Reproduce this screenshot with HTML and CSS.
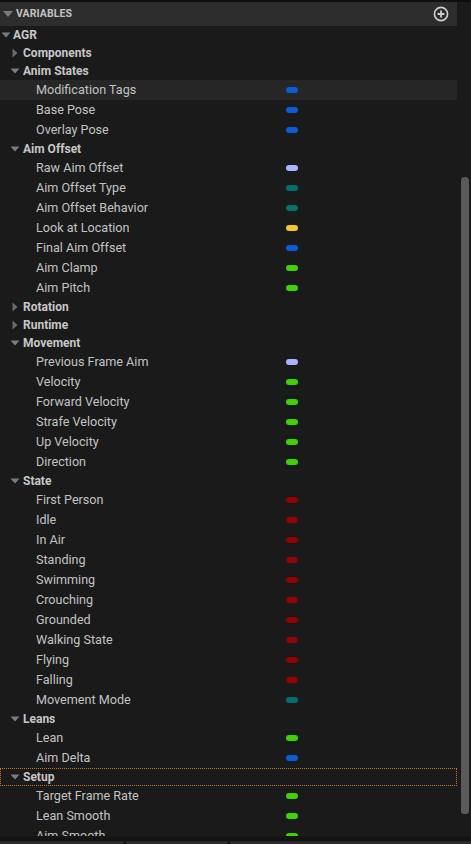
FILE: index.html
```html
<!DOCTYPE html>
<html>
<head>
<meta charset="utf-8">
<link rel="stylesheet" href="styles.css">
</head>
<body>
<div class="app">
  <div class="topstrip"></div>
  <div class="panel">
    <div class="list">
      <div class="header">
        <svg class="tri-down hdr-tri" width="10" height="6" viewBox="0 0 10 6"><polygon points="0,0 10,0 5,6"/></svg>
        <span class="header-title">VARIABLES</span>
        <svg class="add" width="16" height="16" viewBox="0 0 16 16"><circle cx="8" cy="8" r="6.6" fill="none" stroke="#cfcfcf" stroke-width="1.6"/><path d="M8 4.6V11.4M4.6 8H11.4" stroke="#cfcfcf" stroke-width="1.8"/></svg>
      </div>

      <div class="cat root"><svg class="tri-down" width="10" height="6" viewBox="0 0 10 6"><polygon points="0.5,0.5 9.5,0.5 5,5.5"/></svg><span>AGR</span></div>

      <div class="cat"><svg class="tri-right" width="10" height="10" viewBox="0 0 10 10"><polygon points="2.5,0.5 7.5,5 2.5,9.5"/></svg><span>Components</span></div>

      <div class="cat"><svg class="tri-down" width="10" height="6" viewBox="0 0 10 6"><polygon points="0.5,0.5 9.5,0.5 5,5.5"/></svg><span>Anim States</span></div>
      <div class="var selected"><span class="name">Modification Tags</span><span class="pin blue"></span></div>
      <div class="var"><span class="name">Base Pose</span><span class="pin blue"></span></div>
      <div class="var"><span class="name">Overlay Pose</span><span class="pin blue"></span></div>

      <div class="cat"><svg class="tri-down" width="10" height="6" viewBox="0 0 10 6"><polygon points="0.5,0.5 9.5,0.5 5,5.5"/></svg><span>Aim Offset</span></div>
      <div class="var"><span class="name">Raw Aim Offset</span><span class="pin lav"></span></div>
      <div class="var"><span class="name">Aim Offset Type</span><span class="pin teal"></span></div>
      <div class="var"><span class="name">Aim Offset Behavior</span><span class="pin teal"></span></div>
      <div class="var"><span class="name">Look at Location</span><span class="pin gold"></span></div>
      <div class="var"><span class="name">Final Aim Offset</span><span class="pin blue"></span></div>
      <div class="var"><span class="name">Aim Clamp</span><span class="pin green"></span></div>
      <div class="var"><span class="name">Aim Pitch</span><span class="pin green"></span></div>

      <div class="cat"><svg class="tri-right" width="10" height="10" viewBox="0 0 10 10"><polygon points="2.5,0.5 7.5,5 2.5,9.5"/></svg><span>Rotation</span></div>
      <div class="cat"><svg class="tri-right" width="10" height="10" viewBox="0 0 10 10"><polygon points="2.5,0.5 7.5,5 2.5,9.5"/></svg><span>Runtime</span></div>

      <div class="cat"><svg class="tri-down" width="10" height="6" viewBox="0 0 10 6"><polygon points="0.5,0.5 9.5,0.5 5,5.5"/></svg><span>Movement</span></div>
      <div class="var"><span class="name">Previous Frame Aim</span><span class="pin lav"></span></div>
      <div class="var"><span class="name">Velocity</span><span class="pin green"></span></div>
      <div class="var"><span class="name">Forward Velocity</span><span class="pin green"></span></div>
      <div class="var"><span class="name">Strafe Velocity</span><span class="pin green"></span></div>
      <div class="var"><span class="name">Up Velocity</span><span class="pin green"></span></div>
      <div class="var"><span class="name">Direction</span><span class="pin green"></span></div>

      <div class="cat"><svg class="tri-down" width="10" height="6" viewBox="0 0 10 6"><polygon points="0.5,0.5 9.5,0.5 5,5.5"/></svg><span>State</span></div>
      <div class="var"><span class="name">First Person</span><span class="pin red"></span></div>
      <div class="var"><span class="name">Idle</span><span class="pin red"></span></div>
      <div class="var"><span class="name">In Air</span><span class="pin red"></span></div>
      <div class="var"><span class="name">Standing</span><span class="pin red"></span></div>
      <div class="var"><span class="name">Swimming</span><span class="pin red"></span></div>
      <div class="var"><span class="name">Crouching</span><span class="pin red"></span></div>
      <div class="var"><span class="name">Grounded</span><span class="pin red"></span></div>
      <div class="var"><span class="name">Walking State</span><span class="pin red"></span></div>
      <div class="var"><span class="name">Flying</span><span class="pin red"></span></div>
      <div class="var"><span class="name">Falling</span><span class="pin red"></span></div>
      <div class="var"><span class="name">Movement Mode</span><span class="pin teal"></span></div>

      <div class="cat"><svg class="tri-down" width="10" height="6" viewBox="0 0 10 6"><polygon points="0.5,0.5 9.5,0.5 5,5.5"/></svg><span>Leans</span></div>
      <div class="var"><span class="name">Lean</span><span class="pin green"></span></div>
      <div class="var"><span class="name">Aim Delta</span><span class="pin blue"></span></div>

      <div class="cat focused"><svg class="tri-down" width="10" height="6" viewBox="0 0 10 6"><polygon points="0.5,0.5 9.5,0.5 5,5.5"/></svg><span>Setup</span></div>
      <div class="var"><span class="name">Target Frame Rate</span><span class="pin green"></span></div>
      <div class="var"><span class="name">Lean Smooth</span><span class="pin green"></span></div>
      <div class="var"><span class="name">Aim Smooth</span><span class="pin green"></span></div>
    </div>
    <div class="scrollcol"><div class="thumb"></div></div>
  </div>
  <div class="footer">
    <div class="shade"></div>
    <div class="tabs"><div class="tab t1"></div><div class="tab t2"></div><div class="tab t3"></div></div>
  </div>
</div>
</body>
</html>
```
FILE: styles.css
```css
* { box-sizing: border-box; }
html, body {
  margin: 0;
  padding: 0;
  background: #1a1a1a;
  overflow: hidden;
}
.app {
  width: 471px;
  height: 844px;
  display: flex;
  flex-direction: column;
  font-family: Roboto, "Liberation Sans", sans-serif;
  color: #c4c4c4;
}
.topstrip {
  height: 2px;
  background: #0e0e0e;
  flex: none;
}
.panel {
  flex: 1;
  display: flex;
  overflow: hidden;
  min-height: 0;
}
.list {
  width: 457px;
  flex: none;
}
.header {
  height: 24px;
  background: #2d2d2d;
  display: flex;
  align-items: center;
  padding-left: 3px;
  padding-right: 8px;
  padding-bottom: 1px;
}
.header-title {
  margin-left: 3px;
  font-size: 10.5px;
  font-weight: 700;
  color: #c2c2c2;
  letter-spacing: 0.1px;
  flex: 1;
}
.add { display: block; }
.tri-down polygon { fill: #7c7c7c; }
.tri-right polygon { fill: #6a6a6a; }
.tri-down, .tri-right { flex: none; display: block; }
.cat {
  height: 18px;
  display: flex;
  align-items: center;
  padding-left: 10px;
  font-size: 12px;
  font-weight: 700;
  color: #c6c6c6;
  gap: 3px;
}
.cat.root {
  padding-left: 1px;
  gap: 2px;
}
.cat.focused {
  outline: 1px dotted #c67a20;
  outline-offset: -1px;
}
.var {
  height: 20px;
  display: flex;
  align-items: center;
  padding-left: 36px;
  font-size: 12.6px;
  color: #c2c2c2;
}
.var.selected { background: #262626; }
.name {
  width: 250px;
  flex: none;
  white-space: nowrap;
  line-height: 16px;
  padding-bottom: 1px;
}
.pin {
  width: 12px;
  height: 6px;
  border-radius: 3px;
  flex: none;
}
.blue { background: #0a5dd4; }
.lav { background: #a7b5ff; }
.teal { background: #00706a; }
.gold { background: #fcc428; }
.green { background: #3fd400; }
.red { background: #940000; }
.scrollcol {
  flex: 1;
  padding-top: 175px;
  padding-left: 4px;
}
.thumb {
  width: 8px;
  height: 637px;
  background: #5a5a5a;
  border-radius: 4px 4px 3px 3px;
}
.footer {
  flex: none;
  height: 8px;
  display: flex;
  flex-direction: column;
}
.shade {
  height: 5px;
  background: linear-gradient(#161616, #111111);
}
.tabs {
  flex: 1;
  display: flex;
  gap: 2px;
  background: #111;
}
.tab { background: #2a2a2a; }
.t1 { width: 124px; }
.t2 { width: 102px; }
.t3 { flex: 1; }
```
